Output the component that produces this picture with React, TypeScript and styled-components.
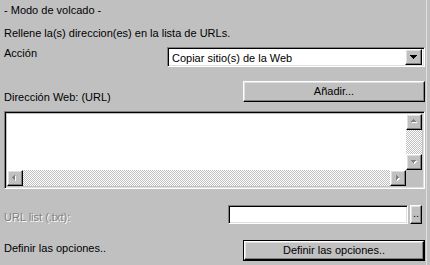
import React from "react";
import styled, { createGlobalStyle } from "styled-components";

const GlobalStyle = createGlobalStyle`
  html, body {
    margin: 0;
    padding: 0;
    background: #c0c0c0;
  }
  body {
    font-family: "Liberation Sans", Arial, sans-serif;
    font-size: 11px;
    color: #000;
  }
`;

// Win95 style bevels
const raised = `
  background: #c0c0c0;
  border: 1px solid;
  border-color: #fff #000 #000 #fff;
  box-shadow: inset -1px -1px #808080, inset 1px 1px #dfdfdf;
`;

const sunken = `
  border: 1px solid;
  border-color: #808080 #fff #fff #808080;
  box-shadow: inset 1px 1px #000, inset -1px -1px #dfdfdf;
`;

const Page = styled.div`
  width: 430px;
  height: 265px;
  overflow: hidden;
  background: #c0c0c0;
`;

const Panel = styled.div`
  width: 427px;
  height: 265px;
  box-sizing: border-box;
  border-right: 1px solid #dfdfdf;
  padding: 0 1px 0 4px;
  display: flex;
  flex-direction: column;
`;

const Text = styled.div<{ $top: number; $disabled?: boolean }>`
  margin-top: ${(p) => p.$top}px;
  line-height: 13px;
  height: 13px;
  white-space: nowrap;
  color: ${(p) => (p.$disabled ? "#808080" : "#000")};
  text-shadow: ${(p) => (p.$disabled ? "1px 1px 0 #fff" : "none")};
`;

const Row = styled.div<{ $top: number; $height: number }>`
  margin-top: ${(p) => p.$top}px;
  height: ${(p) => p.$height}px;
  display: flex;
  align-items: flex-start;
  justify-content: space-between;
`;

const Combo = styled.div`
  ${sunken}
  width: 258px;
  height: 20px;
  box-sizing: border-box;
  background: #fff;
  display: flex;
  align-items: center;
  justify-content: space-between;
  padding: 2px 2px 2px 4px;
`;

const ComboText = styled.span`
  line-height: 13px;
  padding-top: 2px;
`;

const DropButton = styled.div`
  ${raised}
  width: 17px;
  height: 16px;
  box-sizing: border-box;
  display: flex;
  align-items: center;
  justify-content: center;
`;

const Button = styled.div<{ $width: number; $height: number; $default?: boolean }>`
  ${raised}
  width: ${(p) => p.$width}px;
  height: ${(p) => p.$height}px;
  box-sizing: border-box;
  display: flex;
  align-items: center;
  justify-content: center;
  line-height: 13px;
  ${(p) =>
    p.$default &&
    `
    outline: 1px solid #000;
    outline-offset: 0;
    border-color: #fff #000 #000 #fff;
  `}
`;

const DefaultWrap = styled.div`
  border: 1px solid #000;
  display: flex;
`;

const ListBox = styled.div`
  ${sunken}
  margin-top: 9px;
  height: 78px;
  box-sizing: border-box;
  padding: 2px;
  display: grid;
  grid-template-columns: 1fr 16px;
  grid-template-rows: 1fr 16px;
`;

const ListArea = styled.div`
  background: #fff;
`;

const Track = styled.div<{ $vertical?: boolean }>`
  display: flex;
  flex-direction: ${(p) => (p.$vertical ? "column" : "row")};
  justify-content: space-between;
  background: repeating-conic-gradient(#c0c0c0 0 25%, #fff 0 50%) 0 0 / 2px 2px;
`;

const ScrollButton = styled.div`
  ${raised}
  width: 16px;
  height: 16px;
  box-sizing: border-box;
  display: flex;
  align-items: center;
  justify-content: center;
`;

const Corner = styled.div`
  background: #c0c0c0;
`;

const InputGroup = styled.div`
  display: flex;
  gap: 2px;
  margin-right: 3px;
`;

const Field = styled.div`
  ${sunken}
  width: 180px;
  height: 19px;
  box-sizing: border-box;
  background: #fff;
`;

const SmallButton = styled.div`
  ${raised}
  width: 12px;
  height: 19px;
  box-sizing: border-box;
  display: flex;
  align-items: flex-end;
  justify-content: center;
  line-height: 13px;
  padding-bottom: 3px;
`;

type Dir = "up" | "down" | "left" | "right";

const arrowPoints: Record<Dir, string> = {
  up: "4,1 0,5 8,5",
  down: "0,2 8,2 4,6",
  left: "5,0 5,8 1,4",
  right: "2,0 2,8 6,4",
};

const Arrow: React.FC<{ dir: Dir; disabled?: boolean }> = ({ dir, disabled }) => (
  <svg width="8" height="8" viewBox="0 0 9 9" shapeRendering="crispEdges">
    {disabled && (
      <polygon points={arrowPoints[dir]} fill="#fff" transform="translate(1,1)" />
    )}
    <polygon points={arrowPoints[dir]} fill={disabled ? "#808080" : "#000"} />
  </svg>
);

const App: React.FC = () => {
  return (
    <Page>
      <GlobalStyle />
      <Panel>
        <Text $top={4}>- Modo de volcado -</Text>
        <Text $top={10}>Rellene la(s) direccion(es) en la lista de URLs.</Text>

        <Row $top={7} $height={20}>
          <Text $top={0}>Acción</Text>
          <Combo>
            <ComboText>Copiar sitio(s) de la Web</ComboText>
            <DropButton>
              <svg width="7" height="4" viewBox="0 0 7 4" shapeRendering="crispEdges">
                <polygon points="0,0 7,0 3.5,4" fill="#000" />
              </svg>
            </DropButton>
          </Combo>
        </Row>

        <Row $top={14} $height={21}>
          <Text $top={10}>Dirección Web: (URL)</Text>
          <Button $width={182} $height={21}>
            Añadir...
          </Button>
        </Row>

        <ListBox>
          <ListArea />
          <Track $vertical>
            <ScrollButton>
              <Arrow dir="up" disabled />
            </ScrollButton>
            <ScrollButton>
              <Arrow dir="down" disabled />
            </ScrollButton>
          </Track>
          <Track>
            <ScrollButton>
              <Arrow dir="left" disabled />
            </ScrollButton>
            <ScrollButton>
              <Arrow dir="right" disabled />
            </ScrollButton>
          </Track>
          <Corner />
        </ListBox>

        <Row $top={16} $height={19}>
          <Text $top={6} $disabled>
            URL list (.txt):
          </Text>
          <InputGroup>
            <Field />
            <SmallButton>..</SmallButton>
          </InputGroup>
        </Row>

        <Row $top={16} $height={21}>
          <Text $top={2}>Definir las opciones..</Text>
          <DefaultWrap>
            <Button $width={180} $height={19}>
              Definir las opciones..
            </Button>
          </DefaultWrap>
        </Row>
      </Panel>
    </Page>
  );
};

export default App;
